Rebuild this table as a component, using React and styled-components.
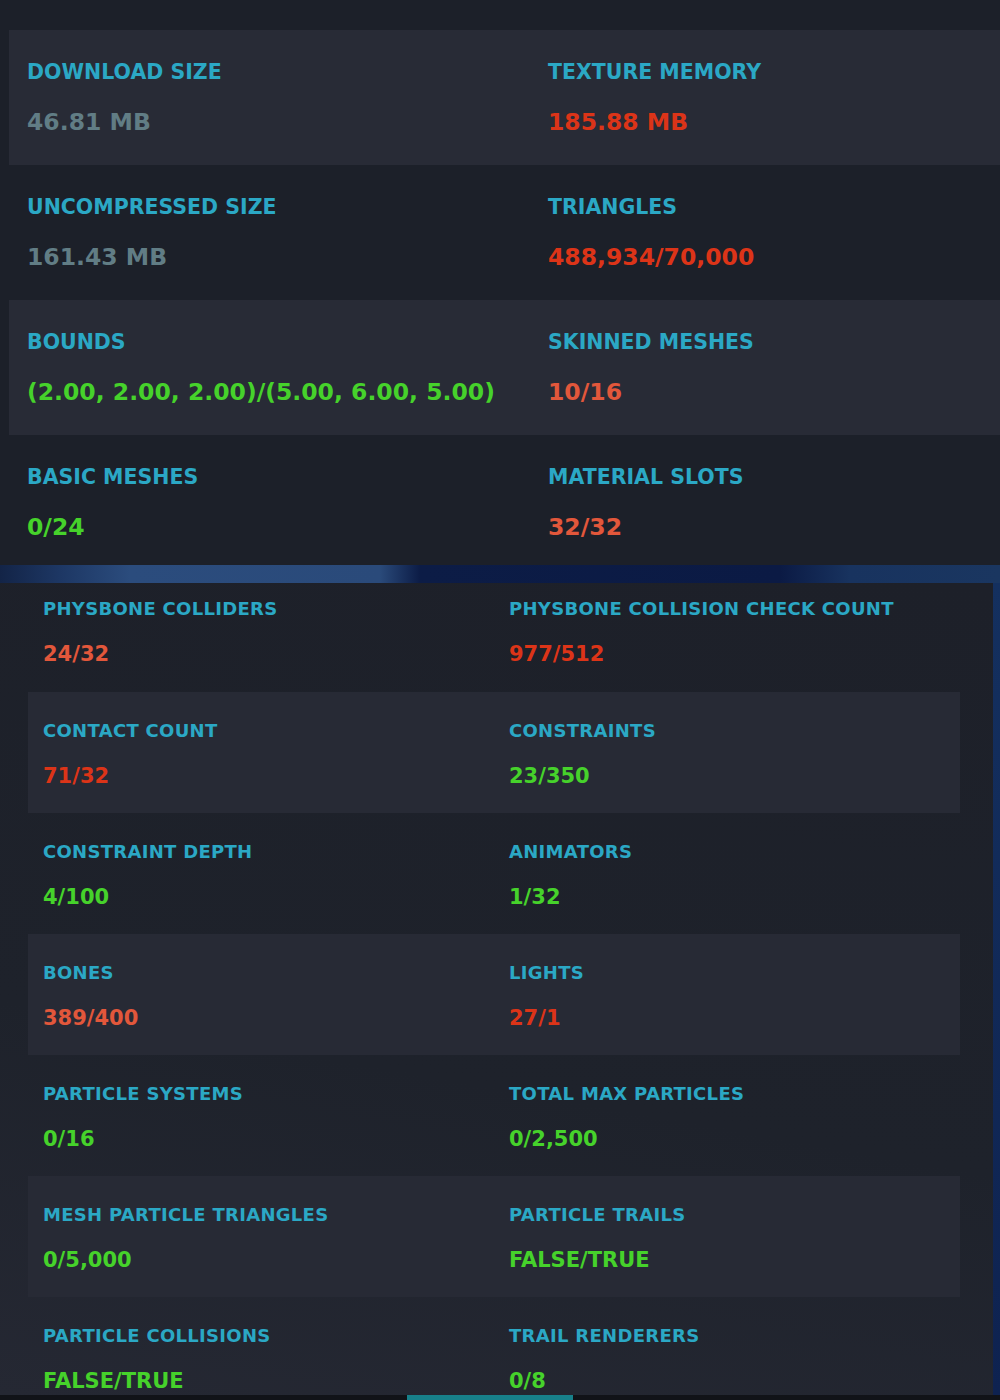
import React from "react";
import styled, { createGlobalStyle } from "styled-components";

const colors = {
    grey: "#617d85",
    red: "#dc3418",
    coral: "#e2573b",
    green: "#46d22b",
};

const topStats = [
    [
        { label: "DOWNLOAD SIZE", value: "46.81 MB", tone: "grey" },
        { label: "TEXTURE MEMORY", value: "185.88 MB", tone: "red" },
    ],
    [
        { label: "UNCOMPRESSED SIZE", value: "161.43 MB", tone: "grey" },
        { label: "TRIANGLES", value: "488,934/70,000", tone: "red" },
    ],
    [
        { label: "BOUNDS", value: "(2.00, 2.00, 2.00)/(5.00, 6.00, 5.00)", tone: "green" },
        { label: "SKINNED MESHES", value: "10/16", tone: "coral" },
    ],
    [
        { label: "BASIC MESHES", value: "0/24", tone: "green" },
        { label: "MATERIAL SLOTS", value: "32/32", tone: "coral" },
    ],
];

const physStats = [
    [
        { label: "PHYSBONE COLLIDERS", value: "24/32", tone: "coral" },
        { label: "PHYSBONE COLLISION CHECK COUNT", value: "977/512", tone: "red" },
    ],
    [
        { label: "CONTACT COUNT", value: "71/32", tone: "red" },
        { label: "CONSTRAINTS", value: "23/350", tone: "green" },
    ],
    [
        { label: "CONSTRAINT DEPTH", value: "4/100", tone: "green" },
        { label: "ANIMATORS", value: "1/32", tone: "green" },
    ],
    [
        { label: "BONES", value: "389/400", tone: "coral" },
        { label: "LIGHTS", value: "27/1", tone: "red" },
    ],
    [
        { label: "PARTICLE SYSTEMS", value: "0/16", tone: "green" },
        { label: "TOTAL MAX PARTICLES", value: "0/2,500", tone: "green" },
    ],
    [
        { label: "MESH PARTICLE TRIANGLES", value: "0/5,000", tone: "green" },
        { label: "PARTICLE TRAILS", value: "FALSE/TRUE", tone: "green" },
    ],
    [
        { label: "PARTICLE COLLISIONS", value: "FALSE/TRUE", tone: "green" },
        { label: "TRAIL RENDERERS", value: "0/8", tone: "green" },
    ],
];

export default function App() {
    return (
        <>
            <GlobalStyle />
            <Page>
                <Overview>
                    {topStats.map((row, i) => (
                        <TopRow key={i} $striped={i % 2 === 0}>
                            {row.map((s) => (
                                <TopCell key={s.label}>
                                    <TopLabel>{s.label}</TopLabel>
                                    <TopValue $tone={s.tone}>{s.value}</TopValue>
                                </TopCell>
                            ))}
                        </TopRow>
                    ))}
                </Overview>
                <GlowBar />
                <Physics>
                    <PhysPanel>
                        {physStats.map((row, i) => (
                            <PhysRow key={i} $striped={i % 2 === 1} $first={i === 0}>
                                {row.map((s) => (
                                    <PhysCell key={s.label}>
                                        <PhysLabel>{s.label}</PhysLabel>
                                        <PhysValue $tone={s.tone}>{s.value}</PhysValue>
                                    </PhysCell>
                                ))}
                            </PhysRow>
                        ))}
                    </PhysPanel>
                </Physics>
                <Footer>
                    <FooterTab />
                </Footer>
            </Page>
        </>
    );
}

const GlobalStyle = createGlobalStyle`
    html, body {
        margin: 0;
        padding: 0;
        background: #1c2029;
    }
    * {
        box-sizing: border-box;
    }
`;

const Page = styled.div`
    width: 1000px;
    height: 1400px;
    display: flex;
    flex-direction: column;
    overflow: hidden;
    background: #1c2029;
    font-family: "DejaVu Sans", Verdana, sans-serif;
    font-weight: bold;
`;

const Overview = styled.div`
    display: flex;
    flex-direction: column;
    padding: 30px 0 0 9px;
    height: 565px;
    overflow: hidden;
`;

const TopRow = styled.div`
    display: grid;
    grid-template-columns: 521px 1fr;
    height: 135px;
    flex-shrink: 0;
    padding: 30px 0 0 18px;
    background: ${(p) => (p.$striped ? "#282b36" : "transparent")};
`;

const TopCell = styled.div`
    display: flex;
    flex-direction: column;
    gap: 24px;
`;

const TopLabel = styled.div`
    font-size: 20.5px;
    line-height: 24px;
    color: #2ba8c5;
    white-space: nowrap;
`;

const TopValue = styled.div`
    font-size: 23.5px;
    line-height: 28px;
    color: ${(p) => colors[p.$tone]};
    white-space: nowrap;
`;

const GlowBar = styled.div`
    height: 18px;
    flex-shrink: 0;
    background: linear-gradient(
        90deg,
        #132447 0px,
        #1d3764 60px,
        #2b4c7d 130px,
        #2a4a7a 380px,
        #0c1c46 420px,
        #0b1a44 780px,
        #18335f 850px,
        #1a3660 1000px
    );
`;

const Physics = styled.div`
    flex: 1;
    min-height: 0;
    overflow: hidden;
    display: flex;
    background: linear-gradient(180deg, #14305f 0%, #0e2250 100%);
    padding-right: 7px;
`;

const PhysPanel = styled.div`
    flex: 1;
    padding: 0 33px 0 28px;
    background: linear-gradient(190deg, #1d2029 0%, #1e222b 60%, #252833 100%);
`;

const PhysRow = styled.div`
    display: grid;
    grid-template-columns: 1fr 1fr;
    height: ${(p) => (p.$first ? "109px" : "121px")};
    padding-top: ${(p) => (p.$first ? "15px" : "28px")};
    background: ${(p) => (p.$striped ? "#272a35" : "transparent")};
`;

const PhysCell = styled.div`
    display: flex;
    flex-direction: column;
    gap: 21px;
    padding-left: 15px;
`;

const PhysLabel = styled.div`
    font-size: 18px;
    line-height: 22px;
    letter-spacing: 0.3px;
    color: #2ba8c5;
    white-space: nowrap;
`;

const PhysValue = styled.div`
    font-size: 21px;
    line-height: 26px;
    color: ${(p) => colors[p.$tone]};
    white-space: nowrap;
`;

const Footer = styled.div`
    height: 5px;
    flex-shrink: 0;
    background: #111318;
    padding-left: 407px;
`;

const FooterTab = styled.div`
    width: 166px;
    height: 100%;
    background: #17808a;
`;
